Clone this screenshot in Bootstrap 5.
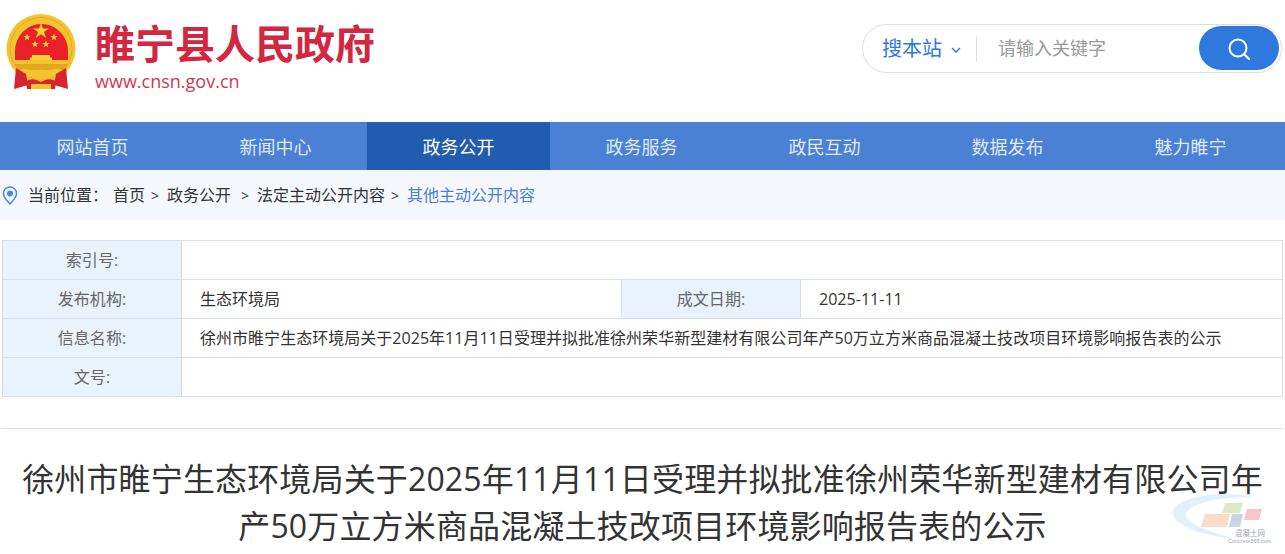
<!DOCTYPE html>
<html lang="zh-CN">
  <head>
    <meta charset="UTF-8" />
    <meta name="viewport" content="width=device-width, initial-scale=1" />
    <title>睢宁县人民政府</title>
    <link href="https://cdn.jsdelivr.net/npm/bootstrap@5.3.2/dist/css/bootstrap.min.css" rel="stylesheet" />
    <style>
      html, body { height: 100%; overflow: hidden; }
      body {
        font-family: "Open Sans", "Noto Sans CJK SC", sans-serif;
        color: #333;
        background: #fff;
        position: relative;
      }
      .site-head { height: 122px; padding: 14px 3px 0 5px; }
      .site-name { font-family: "Noto Sans CJK SC", sans-serif; font-size: 40px; line-height: 50px; font-weight: 700; color: #d3263f; margin-top: 3px; }
      .site-url { font-family: "Open Sans", sans-serif; font-size: 18px; line-height: 22px; color: #cf3a50; margin-top: 3px; }
      .emblem { margin-right: 17px; }
      .search-box {
        width: 420px; height: 49px; margin-top: 10px; padding: 2px;
        border: 1px solid #d6dfea; border-radius: 25px;
      }
      .search-scope { width: 112px; padding-left: 17px; font-size: 20px; color: #2f78dd; border-right: 1px solid #d6dfea; height: 26px; line-height: 26px; }
      .search-scope svg { margin-left: 9px; vertical-align: 3px; }
      .search-input { border: 0; outline: 0; padding: 0 0 0 21px; font-size: 18px; color: #333; min-width: 0; background: transparent; font-family: inherit; }
      .search-input::placeholder { color: #999; opacity: 1; }
      .search-go { width: 80px; height: 44px; border: 0; padding: 0; border-radius: 22px; background: #2f78dd; margin-bottom: 1px; }
      .main-nav { height: 48px; background: #4a81d4; padding-left: 1px; }
      .main-nav a { flex: 0 0 183px; text-align: center; line-height: 50px; font-size: 18px; color: #dfe9f7; text-decoration: none; }
      .main-nav a.on { background: #225cb0; color: #fff; }
      .crumbs { height: 50px; background: #f4f8fd; padding: 0 0 0 2px; font-size: 16px; color: #333; white-space: nowrap; }
      .crumbs .here { color: #4a81d4; }
      .crumbs svg { margin-right: 10px; }
      .crumbs .first { margin-right: 5px; }
      .crumbs .sep { margin: 0 8px 0 6px; font-size: 14px; }
      .crumbs .sep.wide { margin-left: 10px; }
      .info-wrap { padding: 20px 2px 0; }
      .info-table { table-layout: fixed; margin: 0; border-color: #d6dfea; font-size: 16px; color: #333; }
      .info-table td { height: 39px; padding: 0 18px; vertical-align: middle; line-height: 22px; white-space: nowrap; letter-spacing: .03px; }
      .info-table td.lbl { background: #eaf2fc; color: #666; text-align: center; padding: 0; }
      .rule { margin: 31px 2px 0; border: 0; border-top: 1px solid #d6dfea; opacity: 1; }
      .doc-title { font-size: 32px; line-height: 47px; font-weight: 400; color: #333; text-align: center; margin: 26px 0 0; padding: 0 20px; letter-spacing: .15px; }
      .stamp { position: absolute; right: 0; bottom: 0; }
      .stamp text { fill: #a3a8ad; }
    </style>
  </head>
  <body>
    <header class="site-head d-flex justify-content-between align-items-start">
      <div class="d-flex align-items-start">
        <svg class="emblem" width="73" height="78" viewBox="0 0 73 78" aria-hidden="true">
          <circle cx="36" cy="34.500" r="34.500" fill="#f4c430" />
          <circle cx="36" cy="34.500" r="31" fill="none" stroke="#e3a81e" stroke-width="1" />
          <path d="M10 37 A26.500 27 0 0 1 63 37 V46 H10 Z" fill="#e8212b" />
          <polygon fill="#fbd335" points="36,9 37.900,14.500 44,14.500 39.100,18 41,23.700 36,20.200 31,23.700 32.900,18 28,14.500 34.100,14.500" />
          <polygon fill="#fbd335" points="22,19.500 22.900,22 25.600,22 23.400,23.600 24.200,26.300 22,24.700 19.800,26.300 20.600,23.600 18.400,22 21.100,22" />
          <polygon fill="#fbd335" points="49,19.500 49.900,22 52.600,22 50.400,23.600 51.200,26.300 49,24.700 46.800,26.300 47.600,23.600 45.400,22 48.100,22" />
          <polygon fill="#fbd335" points="30,26.500 30.900,29 33.600,29 31.400,30.600 32.200,33.300 30,31.700 27.800,33.300 28.600,30.600 26.400,29 29.100,29" />
          <polygon fill="#fbd335" points="41,26.500 41.900,29 44.600,29 42.400,30.600 43.200,33.300 41,31.700 38.800,33.300 39.600,30.600 37.400,29 40.100,29" />
          <path d="M25 46 V43.500 H27 V41 H45 V43.500 H47 V46 Z" fill="#fbd335" />
          <path d="M10 46 H63 V50 H10 Z" fill="#f4c430" />
          <path d="M9 50 H64 L58 56 H14 Z" fill="#e3a81e" />
          <path d="M14 56 Q24 53 29 59 Q36 52 43 59 Q48 53 58 56 L55 64 Q46 61 36 66 Q26 61 17 64 Z" fill="#f4c430" />
          <path d="M11 54 L21 60 L23 71 L9 75 Z M61 54 L51 60 L49 71 L63 75 Z" fill="#d9232e" />
          <path d="M21 67 Q28 63 36 68 Q44 63 51 67 L50 75 H22 Z" fill="#d9232e" />
          <path d="M26 70 H46 V75 H26 Z" fill="#f4c430" />
        </svg>
        <div>
          <div class="site-name">睢宁县人民政府</div>
          <div class="site-url">www.cnsn.gov.cn</div>
        </div>
      </div>
      <form class="search-box d-flex align-items-center">
        <div class="search-scope flex-shrink-0">搜本站<svg width="10" height="6" viewBox="0 0 10 6"><path d="M1 1 L5 5 L9 1" fill="none" stroke="#2f78dd" stroke-width="1.400" /></svg></div>
        <input class="search-input flex-grow-1" type="text" placeholder="请输入关键字" />
        <button class="search-go flex-shrink-0" type="button" aria-label="搜索">
          <svg width="24" height="24" viewBox="0 0 24 24"><circle cx="11" cy="11" r="8.500" fill="none" stroke="#fff" stroke-width="2" /><path d="M17.500 17.500 L22 22" stroke="#fff" stroke-width="2.200" stroke-linecap="round" /></svg>
        </button>
      </form>
    </header>

    <nav class="main-nav d-flex">
      <a href="#">网站首页</a>
      <a href="#">新闻中心</a>
      <a href="#" class="on">政务公开</a>
      <a href="#">政务服务</a>
      <a href="#">政民互动</a>
      <a href="#">数据发布</a>
      <a href="#">魅力睢宁</a>
    </nav>

    <div class="crumbs d-flex align-items-center">
      <svg width="16" height="19" viewBox="0 0 16 19" aria-hidden="true"><path d="M8 1 C4 1 1.500 4 1.500 7.500 C1.500 11.500 5.500 15.500 8 18 C10.500 15.500 14.500 11.500 14.500 7.500 C14.500 4 12 1 8 1 Z" fill="none" stroke="#4a8ad8" stroke-width="1.500" /><circle cx="8" cy="7.500" r="3" fill="#4a8ad8" /></svg>
      <span class="first">当前位置：</span><span>首页</span><span class="sep">&gt;</span><span>政务公开</span><span class="sep wide">&gt;</span><span>法定主动公开内容</span><span class="sep">&gt;</span><span class="here">其他主动公开内容</span>
    </div>

    <div class="info-wrap">
      <table class="table table-bordered info-table">
        <colgroup>
          <col style="width: 179px" />
          <col style="width: 440px" />
          <col style="width: 179px" />
          <col />
        </colgroup>
        <tbody>
          <tr><td class="lbl">索引号:</td><td colspan="3"></td></tr>
          <tr><td class="lbl">发布机构:</td><td>生态环境局</td><td class="lbl">成文日期:</td><td>2025-11-11</td></tr>
          <tr><td class="lbl">信息名称:</td><td colspan="3">徐州市睢宁生态环境局关于2025年11月11日受理并拟批准徐州荣华新型建材有限公司年产50万立方米商品混凝土技改项目环境影响报告表的公示</td></tr>
          <tr><td class="lbl">文号:</td><td colspan="3"></td></tr>
        </tbody>
      </table>
    </div>

    <hr class="rule" />
    <h1 class="doc-title">徐州市睢宁生态环境局关于2025年11月11日受理并拟批准徐州荣华新型建材有限公司年产50万立方米商品混凝土技改项目环境影响报告表的公示</h1>

    <svg class="stamp" width="115" height="60" viewBox="0 0 115 60" aria-hidden="true">
      <path d="M60 0 C30 -1 2 8 3 19 C4 32 34 42 66 45 C38 38 12 28 16 19 C20 10 46 3 82 3 C76 1 68 0 60 0 Z" fill="#e3f0fa" />
      <polygon points="55,9 73,9 70,19 52,19" fill="#dcebc4" />
      <polygon points="35,20 60,20 57,33 31,33" fill="#fbdcc8" />
      <polygon points="62,20 73,20 70,33 59,33" fill="#c9d6ea" />
      <polygon points="77,15 92,15 89,26 74,26" fill="#f6c6cc" />
      <text x="65" y="42" font-size="7.500" font-family="'Noto Sans CJK SC', sans-serif">混凝土网</text>
      <text x="58" y="49" font-size="5.500" font-family="'Liberation Sans', sans-serif">Concrete365.com</text>
    </svg>

    <script src="https://cdn.jsdelivr.net/npm/bootstrap@5.3.2/dist/js/bootstrap.bundle.min.js"></script>
  </body>
</html>
